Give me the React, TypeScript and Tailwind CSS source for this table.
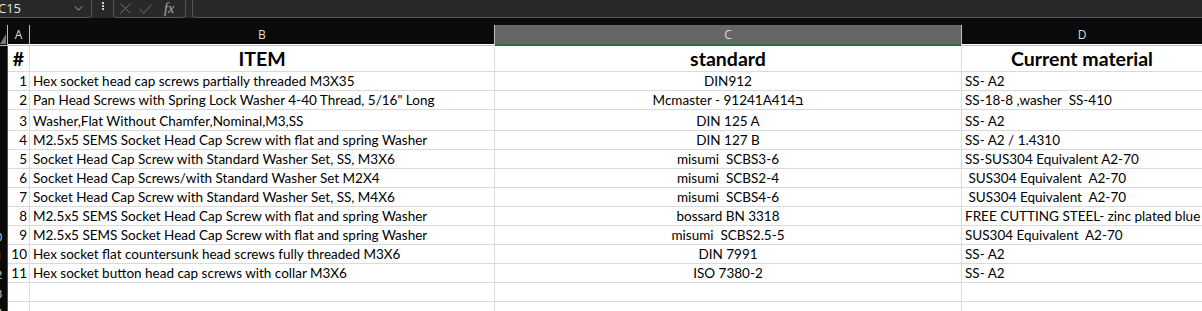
import { ChevronDown } from "lucide-react";

type Row = { n: number; item: string; std: string; mat: string; h: string };

const rows: Row[] = [
  { n: 1, item: "Hex socket head cap screws partially threaded M3X35", std: "DIN912", mat: "SS- A2", h: "h-[19px]" },
  { n: 2, item: 'Pan Head Screws with Spring Lock Washer 4-40 Thread, 5/16" Long', std: "Mcmaster - 91241A414ב", mat: "SS-18-8 ,washer  SS-410", h: "h-[19px]" },
  { n: 3, item: "Washer,Flat Without Chamfer,Nominal,M3,SS", std: "DIN 125 A", mat: "SS- A2", h: "h-[21px]" },
  { n: 4, item: "M2.5x5 SEMS Socket Head Cap Screw with flat and spring Washer", std: "DIN 127 B", mat: "SS- A2 / 1.4310", h: "h-[19px]" },
  { n: 5, item: "Socket Head Cap Screw with Standard Washer Set, SS, M3X6", std: "misumi  SCBS3-6", mat: "SS-SUS304 Equivalent A2-70", h: "h-[19px]" },
  { n: 6, item: "Socket Head Cap Screws/with Standard Washer Set M2X4", std: "misumi  SCBS2-4", mat: " SUS304 Equivalent  A2-70", h: "h-[19px]" },
  { n: 7, item: "Socket Head Cap Screw with Standard Washer Set, SS, M4X6", std: "misumi  SCBS4-6", mat: " SUS304 Equivalent  A2-70", h: "h-[19px]" },
  { n: 8, item: "M2.5x5 SEMS Socket Head Cap Screw with flat and spring Washer", std: "bossard BN 3318", mat: "FREE CUTTING STEEL- zinc plated blue", h: "h-[19px]" },
  { n: 9, item: "M2.5x5 SEMS Socket Head Cap Screw with flat and spring Washer", std: "misumi  SCBS2.5-5", mat: "SUS304 Equivalent  A2-70", h: "h-[19px]" },
  { n: 10, item: "Hex socket flat countersunk head screws fully threaded M3X6", std: "DIN 7991", mat: "SS- A2", h: "h-[19px]" },
  { n: 11, item: "Hex socket button head cap screws with collar M3X6", std: "ISO 7380-2", mat: "SS- A2", h: "h-[19px]" },
];

const cols = "grid grid-cols-[8px_22px_465px_467px_240px]";
const cell = "border-r border-b border-[#dadada] flex items-end overflow-hidden whitespace-pre";

function RowHead({ label }: { label: number }) {
  return (
    <div className="bg-[#0a0a0a] border-r border-[#4d4d4d] overflow-hidden flex items-end">
      <div className="w-[22px] shrink-0 -ml-[15px] text-center text-[11px] leading-[17px] text-[#d8d8d8] font-['Open_Sans',sans-serif]">
        {label}
      </div>
    </div>
  );
}

export default function App() {
  return (
    <div className="w-[1202px] h-[311px] overflow-hidden bg-white font-['Lato',sans-serif]">
      {/* formula bar */}
      <div className="h-[18px] bg-[#292929] flex text-[#e6e6e6]">
        <div className="w-[92px] h-[18px] border-r border-b border-[#555] rounded-br-[4px] flex items-center justify-between pr-[6px]">
          <span className="-ml-[2px] text-[13px] leading-none font-['Open_Sans',sans-serif]">C15</span>
          <ChevronDown size={13} strokeWidth={1.5} className="text-[#cfcfcf]" />
        </div>
        <div className="w-[21px] flex flex-col items-center justify-start pt-[2px] gap-[1px]">
          <span className="w-[2px] h-[2px] bg-[#cfcfcf]" />
          <span className="w-[2px] h-[2px] bg-[#cfcfcf]" />
          <span className="w-[2px] h-[2px] bg-[#cfcfcf]" />
        </div>
        <div className="w-[73px] h-[18px] border-l border-r border-b border-[#555] rounded-b-[4px] flex items-center pl-[6px] gap-[8px]">
          <svg width="11" height="11" viewBox="0 0 11 11" stroke="#6f6f6f" strokeWidth="1" fill="none">
            <path d="M0.5 0.5 L10.5 10.5 M10.5 0.5 L0.5 10.5" />
          </svg>
          <svg width="13" height="10" viewBox="0 0 13 10" stroke="#6f6f6f" strokeWidth="1" fill="none">
            <path d="M0.5 5 L4.5 9.5 L12.5 0.5" />
          </svg>
          <span className="ml-[4px] italic text-[14px] leading-none text-[#b0b0b0] font-['Liberation_Serif',serif]">fx</span>
        </div>
        <div className="w-[6px]" />
        <div className="flex-1 h-[18px] border-l border-b border-[#555] rounded-bl-[4px]" />
      </div>
      <div className="h-[7px] bg-[#0c0a0e]" />

      {/* column headers */}
      <div className={`${cols} h-[19px] bg-[#0a0a0a] text-[12px] text-[#dcdcdc] font-['Open_Sans',sans-serif]`}>
        <div className="border-r border-b border-[#bdbdbd] relative">
          <div className="absolute right-[1px] bottom-[1px] w-0 h-0 border-l-[6px] border-l-transparent border-b-[10px] border-b-[#7a7a7a]" />
        </div>
        <div className="border-r border-b border-[#bdbdbd] flex items-center justify-center">A</div>
        <div className="border-r border-b border-[#bdbdbd] flex items-center justify-center">B</div>
        <div className="bg-[#666] border-r border-b-2 border-r-[#bdbdbd] border-b-[#217346] flex items-center justify-center pt-[1px]">C</div>
        <div className="border-b border-[#bdbdbd] flex items-center justify-center">D</div>
      </div>

      {/* header row */}
      <div className={`${cols} h-[28px] text-black font-bold text-[19.5px] leading-[24px]`}>
        <RowHead label={1} />
        <div className={`${cell} justify-center`}>#</div>
        <div className={`${cell} justify-center`}>ITEM</div>
        <div className={`${cell} justify-center`}>standard</div>
        <div className={`${cell} justify-center border-r-0`}>Current material</div>
      </div>

      {rows.map((r) => (
        <div key={r.n} className={`${cols} ${r.h} text-black text-[13.5px] leading-[17px]`}>
          <RowHead label={r.n + 1} />
          <div className={`${cell} justify-end pr-[2px]`}>{r.n}</div>
          <div className={`${cell} pl-[3px]`}>{r.item}</div>
          <div className={`${cell} justify-center`}>{r.std}</div>
          <div className={`${cell} pl-[3px] border-r-0`}>{r.mat}</div>
        </div>
      ))}

      {[13, 14].map((n) => (
        <div key={n} className={`${cols} h-[19px]`}>
          <RowHead label={n} />
          <div className={cell} />
          <div className={cell} />
          <div className={cell} />
          <div className={`${cell} border-r-0`} />
        </div>
      ))}
    </div>
  );
}
